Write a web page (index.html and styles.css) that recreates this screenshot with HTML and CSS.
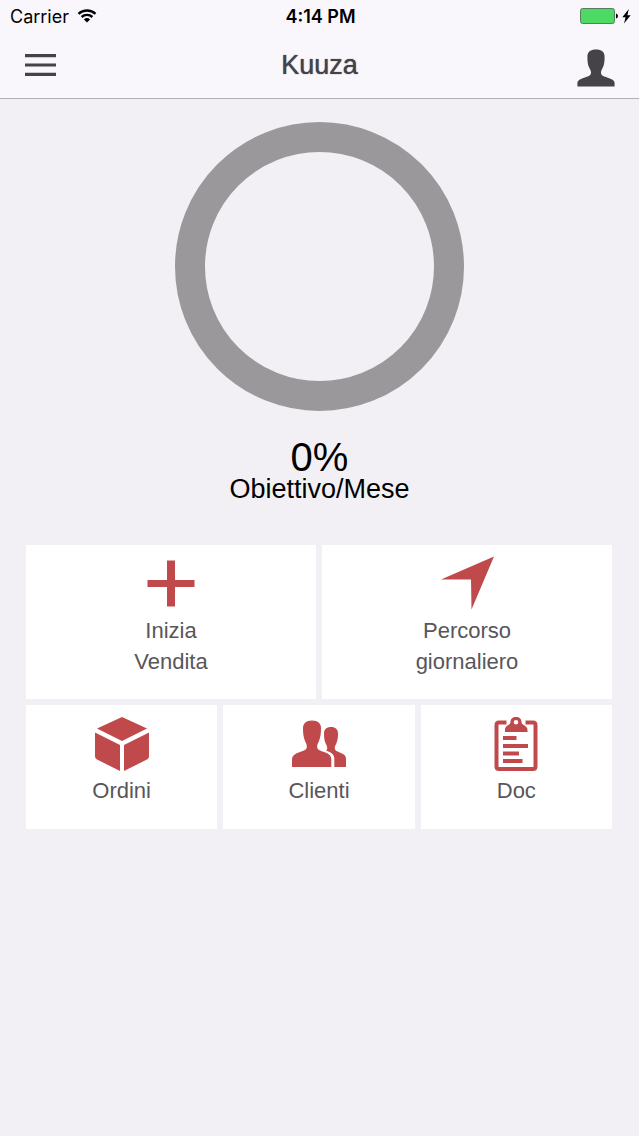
FILE: index.html
```html
<!DOCTYPE html>
<html lang="it">

<head>
    <meta charset="UTF-8">
    <meta name="viewport" content="width=device-width, initial-scale=1.0">
    <title>Kuuza</title>
    <link rel="stylesheet" href="styles.css">
</head>

<body>
    <header class="header">
        <div class="status-bar">
            <div class="carrier">
                <span>Carrier</span>
                <svg class="wifi" viewBox="0 0 20 14">
                    <path d="M1.5 4.8 A12.4 12.4 0 0 1 18.5 4.8" />
                    <path d="M4.6 8 A7.9 7.9 0 0 1 15.4 8" />
                    <path class="dot" d="M10 13.4 L6.9 10.4 A4.4 4.4 0 0 1 13.1 10.4 Z" />
                </svg>
            </div>
            <div class="clock">4:14 PM</div>
            <div class="power">
                <svg class="battery" viewBox="0 0 38 16">
                    <rect class="cell" x="0.5" y="0.5" width="34" height="15" rx="2" />
                    <path d="M36 5.5 Q38 6 38 8 Q38 10 36 10.5 Z" />
                </svg>
                <svg class="bolt" viewBox="0 0 9 15">
                    <path d="M6.8 0 L0.3 8.3 L3.6 8.3 L2 14.6 L8.7 6.2 L5.4 6.2 Z" />
                </svg>
            </div>
        </div>
        <nav class="nav-bar">
            <button type="button" class="nav-button" aria-label="Menu">
                <svg class="menu-icon" viewBox="0 0 32 22">
                    <path d="M1 0H32V3.2H1Z M1 9.4H32V12.6H1Z M1 18.8H32V22H1Z" />
                </svg>
            </button>
            <h1>Kuuza</h1>
            <button type="button" class="nav-button" aria-label="Profilo">
                <svg class="user-icon" viewBox="0 0 38 38">
                    <path d="M19 0.5 C24.5 0.5 27.6 3 27.6 7.5 C27.6 12.5 27.2 16 25.6 19 C24.6 21 24 22 24 23.5 C24 26.5 26 27 29.5 28.2 C35.5 30.3 37.6 31.5 37.6 34 L37.6 37.6 L0.4 37.6 L0.4 34 C0.4 31.5 2.5 30.3 8.5 28.2 C12 27 14 26.5 14 23.5 C14 22 13.4 21 12.4 19 C10.8 16 10.4 12.5 10.4 7.5 C10.4 3 13.5 0.5 19 0.5 Z" />
                </svg>
            </button>
        </nav>
    </header>

    <main>
        <section class="goal">
            <div class="ring"></div>
            <div class="percent">0%</div>
            <div class="goal-label">Obiettivo/Mese</div>
        </section>

        <section class="tiles">
            <div class="tile-row">
                <button type="button" class="tile tile-large">
                    <svg class="tile-icon" viewBox="0 0 56 56">
                        <path d="M24 4.5H32V24H51.5V31H32V50.5H24V31H4.5V24H24Z" />
                    </svg>
                    <span>Inizia<br>Vendita</span>
                </button>
                <button type="button" class="tile tile-large">
                    <svg class="tile-icon" viewBox="0 0 56 56">
                        <path d="M55 0.5 L32.5 53.5 L32 23.5 L2 23.5 Z" />
                    </svg>
                    <span>Percorso<br>giornaliero</span>
                </button>
            </div>
            <div class="tile-row">
                <button type="button" class="tile">
                    <svg class="tile-icon" viewBox="0 0 56 56">
                        <path d="M28 1 L53 12.5 L28 25 L3 12.5 Z M1 16.5 L26 29 L26 55 L3 43.5 Q1 42.5 1 40.5 Z M55 16.5 L30 29 L30 55 L53 43.5 Q55 42.5 55 40.5 Z" />
                    </svg>
                    <span>Ordini</span>
                </button>
                <button type="button" class="tile">
                    <svg class="tile-icon" viewBox="0 0 56 56">
                        <path d="M21 4.5 C27 4.5 30 7.5 30 12 C30 17.5 29.6 21 28 25 C27 27 26.2 28.5 26.2 30.5 C26.2 34 29 34.6 33 36 C39 38.2 40.3 40 40.3 44 L40.3 51 L1 51 L1 44 C1 40 3 38.2 9 36 C13 34.6 15.8 34 15.8 30.5 C15.8 28.5 15 27 14 25 C12.4 21 12 17.5 12 12 C12 7.5 15 4.5 21 4.5 Z" />
                        <path d="M40 11 C44.6 11 47 13.5 47 17.5 C47 22 46.6 24.5 45.3 27.5 C44.5 29.3 43.8 30.3 43.8 32 C43.8 34.8 46 35.3 49.5 36.8 C53.5 38.5 55 40 55 43 L55 51 L43.3 51 L43.3 43 C43.3 38.5 40.5 36.5 34.8 34.6 C36 34.2 36.2 33.4 36.2 32 C36.2 30.3 35.5 29.3 34.7 27.5 C33.4 24.5 33 22 33 17.5 C33 13.5 35.4 11 40 11 Z" />
                    </svg>
                    <span>Clienti</span>
                </button>
                <button type="button" class="tile">
                    <svg class="tile-icon" viewBox="0 0 56 56">
                        <path class="board" d="M18.5 6.5 H11 Q8.5 6.5 8.5 9 V50.5 Q8.5 53 11 53 H45 Q47.5 53 47.5 50.5 V9 Q47.5 6.5 45 6.5 H37.5" />
                        <path fill-rule="evenodd" d="M28 1 C31.5 1 33.5 3 33.5 6 C33.5 9.5 39.5 9 39.5 14 L39.5 16 L17 16 L17 14 C17 9 22.5 9.5 22.5 6 C22.5 3 24.5 1 28 1 Z M28 4 A2.3 2.3 0 1 0 28 8.6 A2.3 2.3 0 1 0 28 4 Z" />
                        <path d="M15 20H28.5V24H15Z M15 28H40V32H15Z M15 35.5H31V39.5H15Z M15 43H34.5V47H15Z" />
                    </svg>
                    <span>Doc</span>
                </button>
            </div>
        </section>
    </main>
</body>

</html>
```

FILE: styles.css
```css
* {
    box-sizing: border-box;
}

body {
    margin: 0;
    min-height: 100vh;
    font-family: "Liberation Sans", Arial, sans-serif;
    background-color: #f2f0f4;
    color: #000;
}

svg {
    display: block;
}

.header {
    background-color: #f9f7fb;
    border-bottom: 1px solid #b2b0b4;
}

.status-bar {
    display: grid;
    grid-template-columns: 1fr auto 1fr;
    align-items: center;
    height: 32px;
    padding: 0 8px 0 10px;
    font-family: Inter, sans-serif;
    font-size: 18px;
}

.carrier {
    display: flex;
    align-items: center;
    gap: 8px;
}

.wifi {
    width: 20px;
    height: 14px;
    fill: none;
    stroke: #000;
    stroke-width: 2.4;
}

.wifi .dot {
    fill: #000;
    stroke: none;
}

.clock {
    font-weight: 600;
}

.power {
    display: flex;
    justify-content: flex-end;
    align-items: center;
    gap: 4px;
}

.battery {
    width: 38px;
    height: 16px;
}

.battery .cell {
    fill: #4cd964;
    stroke: #5d7a63;
}

.bolt {
    width: 9px;
    height: 15px;
}

.nav-bar {
    display: flex;
    justify-content: space-between;
    align-items: center;
    height: 66px;
    padding: 0 24px;
}

.nav-button {
    display: flex;
    align-items: center;
    width: 38px;
    height: 66px;
    padding: 0;
    border: none;
    background: none;
    color: #454347;
    cursor: pointer;
}

.nav-button svg {
    fill: currentColor;
}

.menu-icon {
    width: 32px;
    height: 22px;
}

.user-icon {
    width: 38px;
    height: 38px;
    margin-top: 6px;
}

h1 {
    margin: 0;
    font-size: 27px;
    font-weight: normal;
    color: #454347;
    text-shadow: 0 0 1px #454347;
}

.goal {
    display: flex;
    flex-direction: column;
    align-items: center;
    padding-top: 23px;
}

.ring {
    width: 289px;
    height: 289px;
    border: 30px solid #9a989b;
    border-radius: 50%;
}

.percent {
    margin-top: 28px;
    font-size: 40px;
    line-height: 36px;
}

.goal-label {
    font-size: 27px;
    line-height: 28px;
}

.tiles {
    display: flex;
    flex-direction: column;
    gap: 6px;
    padding: 42px 27px 24px 26px;
}

.tile-row {
    display: flex;
    gap: 6px;
}

.tile {
    flex: 1;
    display: flex;
    flex-direction: column;
    align-items: center;
    min-height: 124px;
    padding: 11px 0 14px;
    border: none;
    background-color: #fff;
    font-family: inherit;
    font-size: 22px;
    line-height: 31px;
    color: #58565a;
    cursor: pointer;
}

.tile-large {
    min-height: 154px;
}

.tile-icon {
    width: 56px;
    height: 56px;
    margin-bottom: 3px;
    fill: #c04a4b;
}

.board {
    fill: none;
    stroke: #c04a4b;
    stroke-width: 4;
}
```
